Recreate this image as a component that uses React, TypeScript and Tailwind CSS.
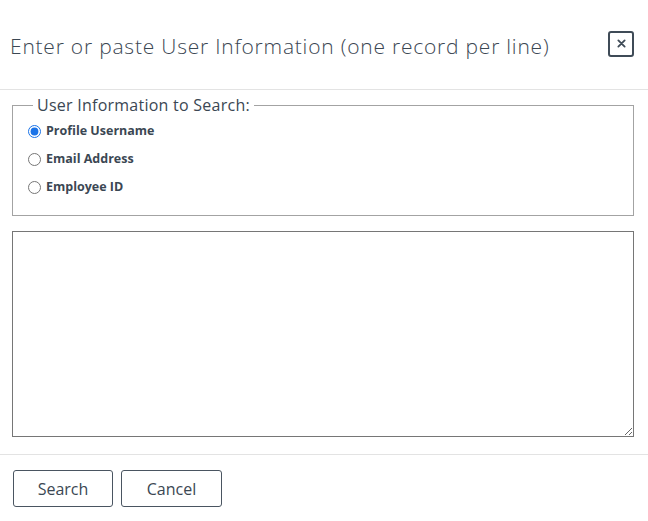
import React from "react";

export default function App() {
  const font = { fontFamily: '"Open Sans", "Lato", sans-serif' };
  return (
    <div className="w-[648px] h-[521px] bg-white text-[#3b4753] overflow-hidden" style={font}>
      <div className="h-[90px] border-b border-[#e3e3e3] flex items-center justify-between pl-[10px] pr-[14px]">
        <h1 className="text-[21px] leading-[28px] font-light tracking-[0.78px] text-[#3b4753] mt-[2px]">
          Enter or paste User Information (one record per line)
        </h1>
        <button className="w-[26px] h-[26px] border-2 border-[#3f4b57] rounded-[3px] flex items-center justify-center mt-[-2px]">
          <svg width="9" height="9" viewBox="0 0 10 10">
            <path d="M1.5 1.5 L8.5 8.5 M8.5 1.5 L1.5 8.5" stroke="#3f4b57" strokeWidth="2" strokeLinecap="round" />
          </svg>
        </button>
      </div>
      <div className="px-[12px] pt-[5px]">
        <fieldset className="border border-[#a3a3a3] w-[622px] h-[121px] px-[15px] pt-[2px]">
          <legend className="px-[4px] ml-[5px] text-[16px] leading-[20px] tracking-[0.25px] text-[#3b4753]">
            User Information to Search:
          </legend>
          <div className="flex flex-col">
            {[
              ["Profile Username", true],
              ["Email Address", false],
              ["Employee ID", false],
            ].map(([label, checked]) => (
              <label key={label as string} className="flex items-center h-[28px] gap-[5px]">
                <input
                  type="radio"
                  name="ut"
                  defaultChecked={checked as boolean}
                  className="w-[13px] h-[13px] m-0 accent-[#1a73e8]"
                />
                <span className="text-[12.5px] font-bold text-[#3b4753]">{label as string}</span>
              </label>
            ))}
          </div>
        </fieldset>
        <textarea className="block mt-[15px] w-[622px] h-[206px] border border-[#767676] resize-y" />
      </div>
      <div className="mt-[17px] border-t border-[#e3e3e3] pt-[15px] px-[13px] flex gap-[8px]">
        <button className="w-[100px] h-[37px] border border-[#4a5561] rounded-[3px] text-[16px] text-[#3b4753]">
          Search
        </button>
        <button className="w-[101px] h-[37px] border border-[#4a5561] rounded-[3px] text-[16px] text-[#3b4753]">
          Cancel
        </button>
      </div>
    </div>
  );
}
